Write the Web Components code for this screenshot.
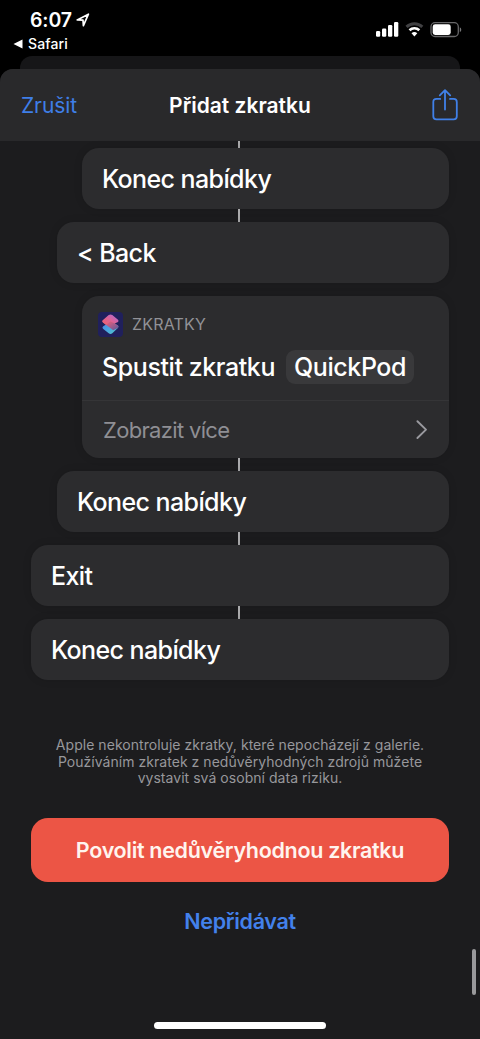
<!DOCTYPE html>
<html lang="cs">
<head>
<meta charset="utf-8">
<title>Přidat zkratku</title>
<style>
html, body { margin: 0; background: #000; }
body { width: 480px; height: 1039px; overflow: hidden; font-family: Inter, "Liberation Sans", sans-serif; color: #fff; }
</style>
</head>
<body>
<shortcut-screen></shortcut-screen>
<script>
const define = (name, html) => customElements.define(name, class extends HTMLElement {
  constructor() {
    super();
    const t = document.createElement('template');
    t.innerHTML = html;
    this.attachShadow({ mode: 'open' }).appendChild(t.content.cloneNode(true));
  }
});

define('status-bar', `
<style>
:host { display: flex; justify-content: space-between; height: 56px; background: #000; }
.left { display: flex; flex-direction: column; }
.time { display: flex; align-items: center; gap: 4px; height: 24px; padding: 8px 0 0 30px; font-size: 19.5px; font-weight: 600; line-height: 24px; letter-spacing: -.15px; }
.back { display: flex; align-items: center; gap: 5px; height: 20px; padding: 2px 0 0 13px; font-size: 14px; font-weight: 500; line-height: 20px; letter-spacing: .15px; }
svg { display: block; }
.right { padding: 20px 18px 0 0; }
</style>
<div class="left">
  <div class="time"><span>6:07</span><svg width="14" height="14" viewBox="0 0 14 14"><path d="M1.2 6.9 12.4 1.2 7.4 12.6 7 7.2Z" fill="none" stroke="#fff" stroke-width="1.7" stroke-linejoin="round"/></svg></div>
  <div class="back"><svg width="10" height="10" viewBox="0 0 10 10"><path d="M.5 5 9.5 .6V9.4Z" fill="#fff"/></svg><span>Safari</span></div>
</div>
<svg class="right" width="87" height="19" viewBox="375 20 87 19">
  <g fill="#fff"><rect x="376" y="31" width="4.2" height="5.8" rx="1.2"/><rect x="382" y="28.5" width="4.3" height="8.3" rx="1.2"/><rect x="388" y="25" width="4.3" height="11.8" rx="1.2"/><rect x="394" y="22" width="4.3" height="14.8" rx="1.2"/></g>
  <path d="M406.5 26.9a11.4 11.4 0 0 1 15.8 0" fill="none" stroke="#414143" stroke-width="3"/>
  <path d="M409.5 30.2a7 7 0 0 1 9.8 0" fill="none" stroke="#fff" stroke-width="2.6"/>
  <path d="M411.5 33.3a4.3 4.3 0 0 1 5.8 0L414.4 36.4Z" fill="#fff"/>
  <rect x="431" y="22.7" width="27.3" height="13.8" rx="4" fill="none" stroke="#68686a" stroke-width="1.3"/>
  <rect x="432.7" y="24.3" width="18" height="10.6" rx="2.4" fill="#fff"/>
  <path d="M459.8 27.3a2.6 2.6 0 0 1 0 4.7Z" fill="#777779"/>
</svg>`);

define('sheet-header', `
<style>
:host { display: grid; grid-template-columns: 1fr auto 1fr; align-items: center; height: 72px; box-sizing: border-box; padding: 0 21px; background: #29292b; border-radius: 13px 13px 0 0; }
.cancel { color: #3f7fe8; font-size: 21px; line-height: 28px; letter-spacing: -.1px; padding-top: 1px; }
.title { font-size: 21px; font-weight: 600; line-height: 28px; letter-spacing: 0; padding-top: 1px; }
svg { display: block; justify-self: end; }
</style>
<span class="cancel"><slot name="cancel"></slot></span>
<span class="title"><slot></slot></span>
<svg width="27" height="34" viewBox="0 0 27 34"><g fill="none" stroke="#4080e8" stroke-width="1.8" stroke-linecap="round" stroke-linejoin="round"><path d="M8.2 10.9H4.5Q1.3 10.9 1.3 14.1V28.2Q1.3 31.4 4.5 31.4H21.6Q24.8 31.4 24.8 28.2V14.1Q24.8 10.9 21.6 10.9H18"/><path d="M13 21.6V2.3M7.8 7.3 13 2.1 18.2 7.3"/></g></svg>`);

define('action-row', `
<style>
:host { display: flex; align-items: center; height: 61px; box-sizing: border-box; padding: 1px 20px 0; border-radius: 17px; background: #2c2c2e; box-shadow: 0 0 9px rgba(0,0,0,.12); font-size: 25px; font-weight: 500; line-height: 32px; letter-spacing: -.6px; }
:host([level="1"]) { margin-left: 26px; }
:host([level="2"]) { margin-left: 51px; }
</style>
<span><slot></slot></span>`);

define('flow-link', `
<style>
:host { display: block; width: 2px; height: 13px; margin-left: 207px; background: #aaaaac; }
:host([hidden-line]) { background: none; }
</style>`);

define('action-card', `
<style>
:host { display: block; height: 162px; margin-left: 51px; border-radius: 17px; background: #2c2c2e; box-shadow: 0 0 9px rgba(0,0,0,.12); }
.app { display: flex; align-items: center; gap: 9px; padding: 15px 0 0 16px; height: 26px; font-size: 16px; line-height: 20px; color: #929297; letter-spacing: .2px; }
.app svg { display: block; }
.main { display: flex; align-items: center; gap: 11px; height: 34px; padding: 13px 0 0 20px; font-size: 25px; font-weight: 500; line-height: 34px; letter-spacing: -.42px; white-space: nowrap; }
.token { padding: 0 8px; border-radius: 9px; background: #39393b; }
.more { display: flex; align-items: center; justify-content: space-between; box-sizing: border-box; height: 57px; margin-top: 16px; padding: 1px 21px 0; border-top: 1px solid #353537; font-size: 22px; line-height: 30px; letter-spacing: -.67px; color: #8f8f94; }
</style>
<div class="app"><svg width="25" height="25" viewBox="0 0 25 25">
<defs><linearGradient id="a" x1="0" y1="1" x2="1" y2="0"><stop stop-color="#f0626b"/><stop offset=".5" stop-color="#dc6398"/><stop offset="1" stop-color="#a76bd9"/></linearGradient><linearGradient id="b" x1="0" y1="0" x2="1" y2="1"><stop stop-color="#4b7fe0"/><stop offset=".55" stop-color="#4ba9e0"/><stop offset="1" stop-color="#54cfc1"/></linearGradient><linearGradient id="c" x1="0" y1="0" x2="1" y2="1"><stop stop-color="#ee6572"/><stop offset=".45" stop-color="#c45d83"/><stop offset="1" stop-color="#55589f"/></linearGradient></defs>
<rect width="25" height="25" rx="4" fill="#20205c"/>
<path d="M12.5 9.2 19.8 13.6Q21.2 14.7 19.8 15.9L14.3 21.2Q12.5 22.7 10.7 21.2L5 16.7Q3.9 15.6 5 14.6Z" fill="url(#b)"/>
<path d="M5 8.1Q3.6 9.3 5 10.5L15.2 18.2 19.8 15.9Q21.2 14.7 19.8 13.6L11.5 7.5Z" fill="url(#c)"/>
<path d="M10.7 3.1Q12.5 2 14.3 3.1L20 7.8Q21.1 9 20 10.1L16.6 11.6 12.4 9.4 8.2 12.9 5 10.5Q3.6 9.3 5 8.1Z" fill="url(#a)"/>
</svg><span><slot name="app"></slot></span></div>
<div class="main"><span class="verb"><slot></slot></span><span class="token"><slot name="token"></slot></span></div>
<div class="more"><span><slot name="more"></slot></span><svg width="13" height="21" viewBox="0 0 13 21"><path d="M2.4 2.2 11 10.6 2.4 19" fill="none" stroke="#9a9a9f" stroke-width="1.9" stroke-linecap="round" stroke-linejoin="round"/></svg></div>`);

define('untrusted-footer', `
<style>
:host { display: flex; flex-direction: column; align-items: center; padding-top: 57px; }
.note { font-size: 14px; line-height: 16.7px; color: #97979b; letter-spacing: .04px; text-align: center; white-space: pre-line; }
.allow { display: flex; align-items: center; justify-content: center; box-sizing: border-box; width: 100%; height: 64px; margin-top: 30.5px; border-radius: 17px; background: #ec5545; color: #fff4ee; font-size: 21.5px; font-weight: 600; letter-spacing: -.31px; }
.deny { margin-top: 24px; line-height: 30px; color: #4381eb; font-size: 21.5px; font-weight: 600; letter-spacing: -.3px; }
</style>
<div class="note"><slot></slot></div>
<div class="allow"><span><slot name="allow"></slot></span></div>
<div class="deny"><slot name="deny"></slot></div>`);

define('shortcut-screen', `
<style>
:host { display: block; position: relative; width: 480px; height: 1039px; overflow: hidden; background: #000; }
.under { height: 13px; margin: 0 20px; background: #161618; border-radius: 12px 12px 0 0; }
.sheet { height: 970px; background: #1c1c1e; border-radius: 13px 13px 0 0; }
.list { padding: 0 31px; }
.first { height: 7px; }
.scroll { position: absolute; right: 4px; top: 949px; width: 4px; height: 46px; border-radius: 2px; background: #99999b; }
.home { position: absolute; left: 154px; top: 1022px; width: 172px; height: 7px; border-radius: 4px; background: #fff; }
</style>
<status-bar></status-bar>
<div class="under"></div>
<div class="sheet">
  <sheet-header><span slot="cancel">Zrušit</span>Přidat zkratku</sheet-header>
  <div class="list">
    <flow-link class="first"></flow-link>
    <action-row level="2">Konec nabídky</action-row>
    <flow-link></flow-link>
    <action-row level="1">&lt; Back</action-row>
    <flow-link hidden-line></flow-link>
    <action-card><span slot="app">ZKRATKY</span>Spustit zkratku<span slot="token">QuickPod</span><span slot="more">Zobrazit více</span></action-card>
    <flow-link></flow-link>
    <action-row level="1">Konec nabídky</action-row>
    <flow-link></flow-link>
    <action-row>Exit</action-row>
    <flow-link></flow-link>
    <action-row>Konec nabídky</action-row>
    <untrusted-footer>Apple nekontroluje zkratky, které nepocházejí z galerie.
Používáním zkratek z nedůvěryhodných zdrojů můžete
vystavit svá osobní data riziku.<span slot="allow">Povolit nedůvěryhodnou zkratku</span><span slot="deny">Nepřidávat</span></untrusted-footer>
  </div>
</div>
<div class="scroll"></div>
<div class="home"></div>`);
</script>
</body>
</html>
